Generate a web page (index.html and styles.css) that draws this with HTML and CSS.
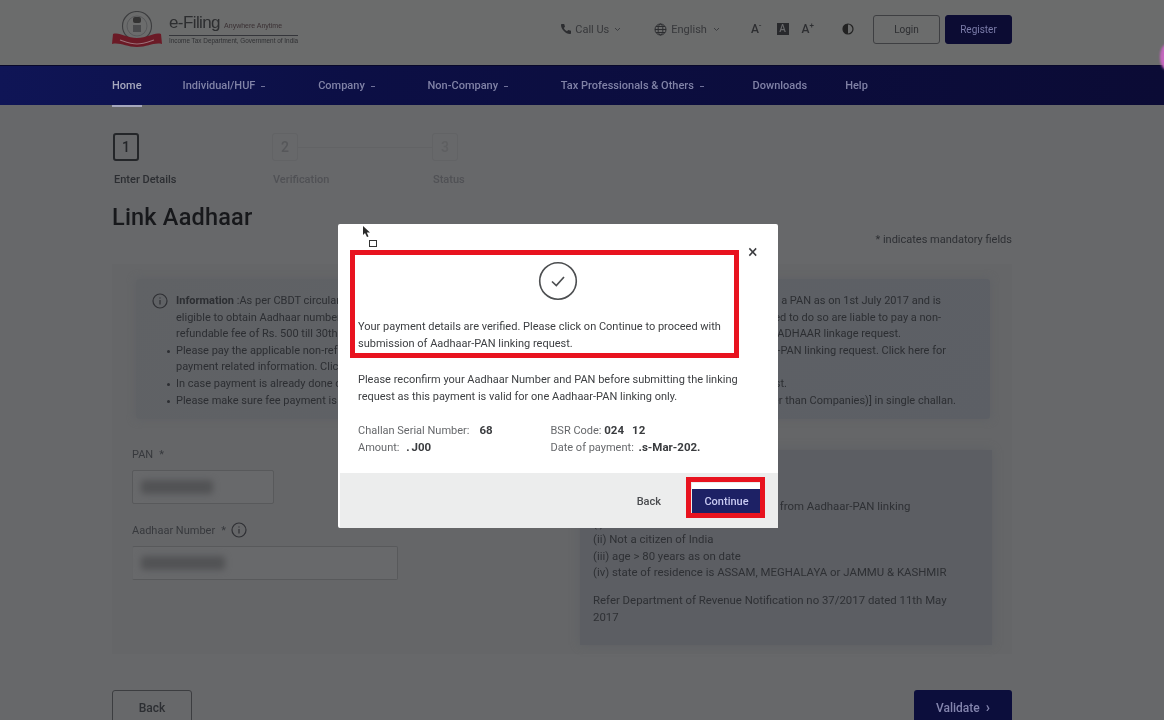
FILE: index.html
```html
<!DOCTYPE html>
<html lang="en">
<head>
    <meta charset="UTF-8">
    <title>Link Aadhaar - e-Filing</title>
    <link rel="stylesheet" href="styles.css">
</head>
<body>
    <div class="page">
        <header class="top">
            <div class="wrap top-row">
                <div class="brand">
                    <svg class="emblem" width="50" height="36" viewBox="0 0 50 36">
                        <circle cx="25" cy="15" r="14.5" fill="none" stroke="#3c3d3f" stroke-width="1.1"/>
                        <circle cx="25" cy="15" r="10" fill="none" stroke="#58595b" stroke-width="1"/>
                        <rect x="21" y="6" width="8" height="6" rx="2" fill="#333"/>
                        <rect x="21" y="14" width="8" height="7" fill="#4a4b4d"/>
                        <path d="M1 23 C8 21 14 27 25 27 C36 27 42 21 49 23 L50 33 C42 31 36 36 25 36 C14 36 8 31 0 33 Z" fill="#6b1a26"/>
                        <path d="M8 29 C14 31 19 33 25 33 C31 33 36 31 42 29" fill="none" stroke="#9a7078" stroke-width="1.2"/>
                    </svg>
                    <div class="brand-text">
                        <div class="brand-name">e-Filing <span class="brand-tag">Anywhere Anytime</span></div>
                        <div class="brand-sub">Income Tax Department, Government of India</div>
                    </div>
                </div>
                <div class="tools">
                    <div class="tool tool-call">
                        <svg width="12" height="12" viewBox="0 0 12 12"><path d="M2 1 L4.2 1 L5 3.8 L3.8 5 C4.5 6.5 5.5 7.5 7 8.2 L8.2 7 L11 7.8 L11 10 C11 10.6 10.6 11 10 11 C5.5 10.8 1.2 6.5 1 2 C1 1.4 1.4 1 2 1 Z" fill="#2c2d30"/></svg>
                        <span>Call Us</span>
                        <svg class="chev" width="7" height="5" viewBox="0 0 7 5"><path d="M1 1 L3.5 3.5 L6 1" fill="none" stroke="#3c3d40" stroke-width="1"/></svg>
                    </div>
                    <div class="tool tool-lang">
                        <svg width="13" height="13" viewBox="0 0 13 13" fill="none" stroke="#2c2d30" stroke-width="1"><circle cx="6.5" cy="6.5" r="5.5"/><ellipse cx="6.5" cy="6.5" rx="2.4" ry="5.5"/><path d="M1 6.5 H12 M2 3.5 H11 M2 9.5 H11"/></svg>
                        <span>English</span>
                        <svg class="chev" width="7" height="5" viewBox="0 0 7 5"><path d="M1 1 L3.5 3.5 L6 1" fill="none" stroke="#3c3d40" stroke-width="1"/></svg>
                    </div>
                    <div class="font-tools">
                        <span class="font-a">A<sup>-</sup></span>
                        <span class="font-a font-box">A</span>
                        <span class="font-a">A<sup>+</sup></span>
                    </div>
                    <svg class="contrast" width="12" height="12" viewBox="0 0 12 12"><circle cx="6" cy="6" r="5" fill="none" stroke="#222" stroke-width="1.2"/><path d="M6 1 A5 5 0 0 0 6 11 Z" fill="#222"/></svg>
                    <a class="btn-login">Login</a>
                    <a class="btn-register">Register</a>
                </div>
            </div>
        </header>

        <nav class="nav">
            <div class="wrap nav-row">
                <a class="nav-item nav-home">Home</a>
                <a class="nav-item">Individual/HUF <i class="caret"></i></a>
                <a class="nav-item">Company <i class="caret"></i></a>
                <a class="nav-item">Non-Company <i class="caret"></i></a>
                <a class="nav-item nav-tax">Tax Professionals &amp; Others <i class="caret"></i></a>
                <a class="nav-item nav-dl">Downloads</a>
                <a class="nav-item">Help</a>
            </div>
        </nav>

        <main class="wrap main">
            <div class="steps">
                <div class="step step-on"><div class="step-box">1</div><div class="step-label">Enter Details</div></div>
                <div class="step"><div class="step-box">2</div><div class="step-label">Verification</div></div>
                <div class="step step-last"><div class="step-box">3</div><div class="step-label">Status</div></div>
            </div>

            <h1 class="title">Link Aadhaar</h1>
            <div class="mandatory">* indicates mandatory fields</div>

            <section class="card">
                <div class="info">
                    <svg class="info-icon" width="16" height="16" viewBox="0 0 16 16" fill="none" stroke="#2f3034"><circle cx="8" cy="8" r="7" stroke-width="1.2"/><path d="M8 7 V11.5 M8 4.5 V5.6" stroke-width="1.2"/></svg>
                    <div class="info-lines">
                        <div class="line end-1"><span><b>Information</b> :As per CBDT circular no 7 of 2022, every person who has been</span><span>allotted a PAN as on 1st July 2017 and is</span></div>
                        <div class="line end-1"><span>eligible to obtain Aadhaar number must link by the due date.</span><span>Those required to do so are liable to pay a non-</span></div>
                        <div class="line end-2"><span>refundable fee of Rs. 500 till 30th June 2022 and Rs. 1000 after</span><span>submitting AADHAAR linkage request.</span></div>
                        <div class="line end-3 bullet"><span>Please pay the applicable non-refundable fee before the</span><span>Aadhaar-PAN linking request. Click here for</span></div>
                        <div class="line end-5"><span>payment related information. Click here to pay the fee</span></div>
                        <div class="line end-4 bullet"><span>In case payment is already done on the portal, please</span><span>request.</span></div>
                        <div class="line end-6 bullet"><span>Please make sure fee payment is done as [(0021) Income Tax</span><span>(Other than Companies)] in single challan.</span></div>
                    </div>
                </div>

                <div class="lower">
                    <div class="form">
                        <label class="field-label">PAN <span class="star">*</span></label>
                        <div class="input input-pan"><span class="smudge smudge-pan"></span></div>
                        <label class="field-label">Aadhaar Number <span class="star">*</span>
                            <svg width="16" height="16" viewBox="0 0 16 16" fill="none" stroke="#2f3034"><circle cx="8" cy="8" r="7" stroke-width="1.2"/><path d="M8 7 V11.5 M8 4.5 V5.6" stroke-width="1.2"/></svg>
                        </label>
                        <div class="input input-aadhaar"><span class="smudge smudge-aadhaar"></span></div>
                    </div>
                    <div class="note">
                        <p>The following persons are exempted from Aadhaar-PAN linking</p>
                        <p>(i) NRI</p>
                        <p>(ii) Not a citizen of India</p>
                        <p>(iii) age &gt; 80 years as on date</p>
                        <p>(iv) state of residence is ASSAM, MEGHALAYA or JAMMU &amp; KASHMIR</p>
                        <p class="note-ref">Refer Department of Revenue Notification no 37/2017 dated 11th May 2017</p>
                    </div>
                </div>
            </section>

            <div class="actions">
                <a class="btn-back">Back</a>
                <a class="btn-validate">Validate <span class="arrow">›</span></a>
            </div>
        </main>
    </div>

    <span class="pink-dot"></span>

    <div class="modal">
        <div class="modal-body">
            <span class="close">×</span>
            <svg class="check" width="40" height="40" viewBox="0 0 40 40" fill="none" stroke="#4c4e50"><circle cx="20" cy="20" r="18.3" stroke-width="1.6"/><path d="M14 20.5 L18.3 24.5 L26 16" stroke-width="1.7"/></svg>
            <p class="msg">Your payment details are verified. Please click on Continue to proceed with submission of Aadhaar-PAN linking request.</p>
            <p class="msg msg-2">Please reconfirm your Aadhaar Number and PAN before submitting the linking request as this payment is valid for one Aadhaar-PAN linking only.</p>
            <div class="details">
                <div>Challan Serial Number:<i class="white w-10"></i><b>68</b></div>
                <div>BSR Code: <b>024</b><i class="white w-8"></i><b>12</b><i class="white w-4"></i></div>
                <div>Amount: <i class="white w-4"></i><b>.</b><i class="white w-2"></i><b>J00</b></div>
                <div>Date of payment: <i class="white w-2"></i><b>.</b><b>s-Mar-202.</b></div>
            </div>
        </div>
        <div class="modal-foot">
            <a class="foot-back">Back</a>
            <a class="foot-continue">Continue</a>
        </div>
    </div>

    <!-- red boxes drawn over the screenshot -->
    <div class="mark mark-msg"></div>
    <div class="mark mark-btn"></div>

    <svg class="cursor" width="9" height="14" viewBox="0 0 9 14"><path d="M1 1 L1 10 L3 8 L5 12 L6.5 11.5 L4.8 7.6 L8 7.4 Z" fill="#2a2a2a"/></svg>
    <span class="cursor-box"></span>
</body>
</html>
```

FILE: styles.css
```css
* {
    margin: 0;
    padding: 0;
    box-sizing: border-box;
}

html, body {
    height: 720px;
    overflow: hidden;
}

body {
    font-family: 'Roboto', 'Liberation Sans', sans-serif;
    font-size: 11px;
    background: #67686a;
    color: #2c2e32;
    position: relative;
}

.page {
    height: 720px;
    overflow: hidden;
    filter: blur(0.5px);
}

.wrap {
    width: 900px;
    margin-left: 112px;
}

/* header */
.top {
    height: 65px;
    background: #6b6c6c;
}

.top-row {
    display: flex;
    justify-content: space-between;
    height: 65px;
}

.brand {
    display: flex;
    align-items: flex-start;
    padding-top: 11px;
}

.emblem {
    margin-right: 7px;
}

.brand-text {
    padding-top: 2px;
}

.brand-name {
    font-family: 'Liberation Sans', sans-serif;
    font-size: 17px;
    letter-spacing: -0.6px;
    line-height: 19px;
    color: #2d2e30;
    border-bottom: 1px solid #34353a;
    width: 129px;
    white-space: nowrap;
}

.brand-tag {
    font-size: 7px;
    letter-spacing: 0;
    color: #3a3033;
}

.brand-sub {
    font-family: 'Liberation Sans', sans-serif;
    font-size: 6.4px;
    line-height: 10px;
    color: #303134;
    white-space: nowrap;
}

.tools {
    display: flex;
    align-items: center;
    height: 58px;
    color: #37383b;
}

.tool {
    display: flex;
    align-items: center;
    gap: 3px;
    font-size: 11px;
}

.tool-call {
    margin-right: 33px;
}

.tool-lang {
    gap: 4px;
    margin-right: 31px;
}

.chev {
    margin-left: 2px;
}

.font-tools {
    display: flex;
    align-items: center;
    gap: 13px;
    margin-right: 28px;
}

.font-a {
    font-size: 12px;
    font-weight: 500;
    color: #2d2e31;
    position: relative;
}

.font-a sup {
    font-size: 8px;
    line-height: 0;
}

.font-box {
    background: #28292c;
    color: #67686a;
    width: 12px;
    height: 12px;
    line-height: 12px;
    font-size: 10px;
    text-align: center;
    margin-left: 2px;
}

.contrast {
    margin-right: 19px;
}

.btn-login,
.btn-register {
    width: 67px;
    height: 29px;
    line-height: 27px;
    text-align: center;
    border-radius: 3px;
    font-size: 10px;
}

.btn-login {
    border: 1px solid #3e3f42;
    color: #2d2e31;
    margin-right: 5px;
}

.btn-register {
    background: #0c0c33;
    border: 1px solid #0c0c33;
    color: #7a7ba8;
}

/* nav */
.nav {
    height: 40px;
    background: linear-gradient(90deg, #0f1556 0%, #0c0f45 30%, #0b0b35 100%);
    border-top: 1px solid #08082a;
}

.nav-row {
    display: flex;
    gap: 53px;
    height: 39px;
    align-items: center;
}

.nav-item {
    font-size: 11px;
    font-weight: 500;
    color: #8082a6;
    white-space: nowrap;
    position: relative;
}

.nav-home {
    color: #a6a8bd;
    margin-right: -12px;
}

.nav-home::after {
    content: '';
    position: absolute;
    left: 0;
    right: 0;
    top: 26px;
    height: 2px;
    background: #a6a8bd;
}

.nav-tax {
    margin-right: -4px;
}

.nav-dl {
    margin-right: -15px;
}

.caret {
    display: inline-block;
    width: 4px;
    height: 1px;
    background: #6f7099;
    vertical-align: middle;
    margin-left: 3px;
}

/* steps */
.main {
    padding-top: 28px;
}

.steps {
    display: flex;
    height: 57px;
}

.step {
    width: 160px;
    position: relative;
}

.step-last {
    width: 60px;
}

.step-box {
    width: 26px;
    height: 28px;
    border: 1px solid #626365;
    border-radius: 3px;
    color: #56575a;
    font-size: 14px;
    font-weight: 500;
    line-height: 26px;
    text-align: center;
    margin-bottom: 12px;
}

.step-last .step-box {
    color: #5e5f61;
}

.step:nth-child(3)::before {
    content: '';
    position: absolute;
    right: 100%;
    top: 14px;
    width: 134px;
    height: 1px;
    background: #626365;
}

.step-label {
    color: #505155;
    font-weight: 500;
    font-size: 11px;
    line-height: 14px;
    margin-left: 1px;
}

.step-on .step-box {
    border: 2px solid #242629;
    color: #242629;
    line-height: 24px;
    margin-left: 1px;
}

.step-on .step-label {
    color: #2c2e32;
    margin-left: 2px;
}

.title {
    font-size: 23.5px;
    font-weight: 500;
    line-height: 28px;
    color: #17181b;
    margin-top: 13px;
    letter-spacing: 0.2px;
}

.mandatory {
    text-align: right;
    line-height: 14px;
    color: #2e3034;
    margin-top: 2px;
}

/* main card */
.card {
    margin-top: 17px;
    height: 390px;
    background: #656668;
    padding: 15px 22px 0 24px;
}

.info {
    background: linear-gradient(135deg, #606265 0%, #5c5f65 100%);
    box-shadow: 0 0 8px #5f6165;
    height: 140px;
    width: 854px;
    padding: 14px 0 0 16px;
    display: flex;
    border-radius: 3px;
}

.info-icon {
    flex: none;
    margin-right: 8px;
}

.line {
    display: flex;
    justify-content: space-between;
    line-height: 16.6px;
    white-space: nowrap;
}

.line b {
    font-weight: 700;
}

.end-1 { width: 765px; }
.end-2 { width: 725px; }
.end-3 { width: 770px; }
.end-4 { width: 611px; }
.end-5 { width: 400px; }
.end-6 { width: 780px; }

.bullet {
    position: relative;
}

.bullet::before {
    content: '';
    position: absolute;
    left: -9px;
    top: 7px;
    width: 3px;
    height: 3px;
    border-radius: 50%;
    background: #2c2e32;
}

.lower {
    display: flex;
    justify-content: space-between;
    margin-top: 26px;
    margin-left: -4px;
}

.field-label {
    display: flex;
    align-items: center;
    gap: 5px;
    height: 18px;
    color: #37393d;
}

.star {
    margin-left: 1px;
}

.input {
    height: 34px;
    border: 1px solid #58595b;
    border-radius: 2px;
    margin: 7px 0 17px;
    padding: 9px 8px;
    background: #68696b;
}

.input-pan {
    width: 142px;
}

.input-aadhaar {
    width: 266px;
    border-left-color: #646567;
}

.smudge {
    display: block;
    height: 14px;
    border-radius: 4px;
    background: #525355;
    filter: blur(3px);
}

.smudge-pan {
    width: 72px;
}

.smudge-aadhaar {
    width: 84px;
}

.note {
    width: 412px;
    height: 195px;
    background: #5c5e63;
    box-shadow: 0 0 8px #5e6064;
    padding: 48px 40px 0 13px;
    margin-top: 5px;
    margin-right: -2px;
}

.note p {
    font-size: 11.4px;
    line-height: 16.6px;
    color: #2e3034;
}

.note-ref {
    margin-top: 11px;
}

/* bottom buttons */
.actions {
    display: flex;
    justify-content: space-between;
    margin-top: 36px;
}

.btn-back,
.btn-validate {
    height: 40px;
    border-radius: 3px;
    font-size: 12px;
    font-weight: 500;
    text-align: center;
    line-height: 34px;
}

.btn-back {
    width: 80px;
    border: 1px solid #3c3d40;
    color: #2c2e32;
}

.btn-validate {
    width: 98px;
    background: #0c0e3c;
    color: #8384ad;
}

.arrow {
    margin-left: 3px;
    font-size: 14px;
    font-weight: 700;
}

.pink-dot {
    position: absolute;
    left: 1160px;
    top: 44px;
    width: 14px;
    height: 26px;
    border-radius: 50%;
    background: #c566bf;
    filter: blur(1px);
}

/* modal */
.modal {
    position: absolute;
    left: 338px;
    top: 224px;
    width: 440px;
    height: 304px;
    background: #fff;
    display: flex;
    flex-direction: column;
    border-radius: 2px;
    filter: blur(0.35px);
}

.modal-body {
    flex: 1;
    padding: 37px 20px 0;
    position: relative;
    color: #3e4043;
}

.close {
    position: absolute;
    left: 410px;
    top: 18px;
    font-size: 18px;
    line-height: 20px;
    color: #3c3d40;
}

.check {
    display: block;
    margin-left: 180px;
}

.msg {
    line-height: 16.6px;
    width: 385px;
    margin-top: 18px;
}

.msg-2 {
    margin-top: 20px;
}

.details {
    display: grid;
    grid-template-columns: 192.5px 1fr;
    grid-auto-rows: 16.6px;
    margin-top: 19px;
    color: #66686b;
}

.details b {
    font-size: 11.5px;
    line-height: 1;
    font-weight: 700;
    color: #3a3c3f;
}

.white {
    display: inline-block;
    height: 10px;
    background: #fff;
}

.w-2 { width: 2px; }
.w-4 { width: 4px; }
.w-8 { width: 8px; }
.w-10 { width: 10px; }

.modal-foot {
    height: 55px;
    background: #eceded;
    margin: 0 0 0 2px;
    display: flex;
    align-items: center;
    justify-content: flex-end;
    padding: 0 17px 0 0;
    font-weight: 500;
}

.foot-back {
    color: #4a4c4f;
    margin-right: 31px;
    margin-top: 1px;
    font-size: 11px;
}

.foot-continue {
    width: 69px;
    height: 31px;
    background: #1d2165;
    border-top: 6px solid #fff;
    color: #c8caf2;
    font-size: 11px;
    line-height: 25px;
    text-align: center;
    margin-top: -4px;
}

.mark {
    position: absolute;
    border: 5px solid #e8131f;
}

.mark-msg {
    left: 350px;
    top: 250px;
    width: 389px;
    height: 108px;
}

.mark-btn {
    left: 686px;
    top: 477px;
    width: 79px;
    height: 41px;
}

.cursor {
    position: absolute;
    left: 362px;
    top: 225px;
}

.cursor-box {
    position: absolute;
    left: 369px;
    top: 240px;
    width: 8px;
    height: 7px;
    border: 1px solid #333;
}
```
